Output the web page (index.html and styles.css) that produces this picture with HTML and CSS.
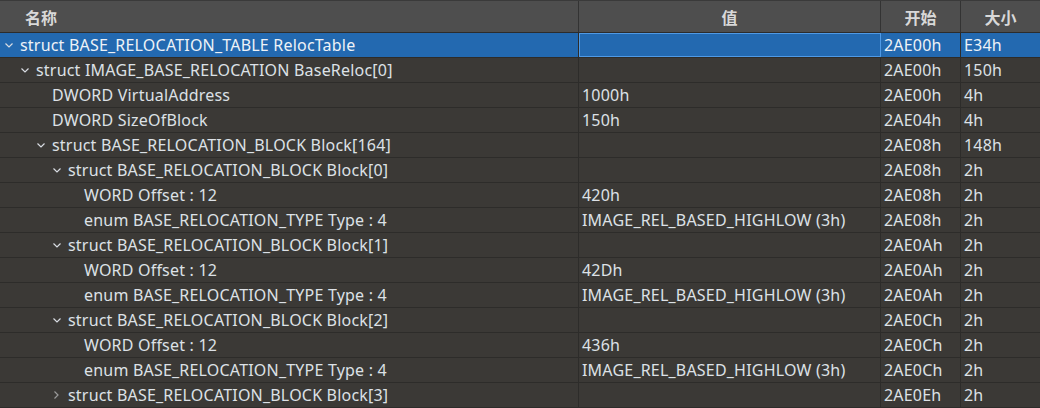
FILE: index.html
```html
<!DOCTYPE html>
<html>
<head>
<meta charset="utf-8">
<link rel="stylesheet" href="styles.css">
</head>
<body>
<div class="table">
  <div class="row head">
    <div class="cell name-h">名称</div>
    <div class="cell center">值</div>
    <div class="cell center">开始</div>
    <div class="cell center last">大小</div>
  </div>

  <div class="row selected">
    <div class="cell name l0"><svg class="chev" viewBox="0 0 8 5"><path d="M0.5 0.5 L4 4 L7.5 0.5"/></svg>struct BASE_RELOCATION_TABLE RelocTable</div>
    <div class="cell focus"></div>
    <div class="cell">2AE00h</div>
    <div class="cell last">E34h</div>
  </div>
  <div class="row">
    <div class="cell name l1"><svg class="chev" viewBox="0 0 8 5"><path d="M0.5 0.5 L4 4 L7.5 0.5"/></svg>struct IMAGE_BASE_RELOCATION BaseReloc[0]</div>
    <div class="cell"></div>
    <div class="cell">2AE00h</div>
    <div class="cell last">150h</div>
  </div>
  <div class="row">
    <div class="cell name l2">DWORD VirtualAddress</div>
    <div class="cell">1000h</div>
    <div class="cell">2AE00h</div>
    <div class="cell last">4h</div>
  </div>
  <div class="row">
    <div class="cell name l2">DWORD SizeOfBlock</div>
    <div class="cell">150h</div>
    <div class="cell">2AE04h</div>
    <div class="cell last">4h</div>
  </div>
  <div class="row">
    <div class="cell name l2 c"><svg class="chev" viewBox="0 0 8 5"><path d="M0.5 0.5 L4 4 L7.5 0.5"/></svg>struct BASE_RELOCATION_BLOCK Block[164]</div>
    <div class="cell"></div>
    <div class="cell">2AE08h</div>
    <div class="cell last">148h</div>
  </div>
  <div class="row">
    <div class="cell name l3 c"><svg class="chev" viewBox="0 0 8 5"><path d="M0.5 0.5 L4 4 L7.5 0.5"/></svg>struct BASE_RELOCATION_BLOCK Block[0]</div>
    <div class="cell"></div>
    <div class="cell">2AE08h</div>
    <div class="cell last">2h</div>
  </div>
  <div class="row">
    <div class="cell name l4">WORD Offset : 12</div>
    <div class="cell">420h</div>
    <div class="cell">2AE08h</div>
    <div class="cell last">2h</div>
  </div>
  <div class="row">
    <div class="cell name l4">enum BASE_RELOCATION_TYPE Type : 4</div>
    <div class="cell">IMAGE_REL_BASED_HIGHLOW (3h)</div>
    <div class="cell">2AE08h</div>
    <div class="cell last">2h</div>
  </div>
  <div class="row">
    <div class="cell name l3 c"><svg class="chev" viewBox="0 0 8 5"><path d="M0.5 0.5 L4 4 L7.5 0.5"/></svg>struct BASE_RELOCATION_BLOCK Block[1]</div>
    <div class="cell"></div>
    <div class="cell">2AE0Ah</div>
    <div class="cell last">2h</div>
  </div>
  <div class="row">
    <div class="cell name l4">WORD Offset : 12</div>
    <div class="cell">42Dh</div>
    <div class="cell">2AE0Ah</div>
    <div class="cell last">2h</div>
  </div>
  <div class="row">
    <div class="cell name l4">enum BASE_RELOCATION_TYPE Type : 4</div>
    <div class="cell">IMAGE_REL_BASED_HIGHLOW (3h)</div>
    <div class="cell">2AE0Ah</div>
    <div class="cell last">2h</div>
  </div>
  <div class="row">
    <div class="cell name l3 c"><svg class="chev" viewBox="0 0 8 5"><path d="M0.5 0.5 L4 4 L7.5 0.5"/></svg>struct BASE_RELOCATION_BLOCK Block[2]</div>
    <div class="cell"></div>
    <div class="cell">2AE0Ch</div>
    <div class="cell last">2h</div>
  </div>
  <div class="row">
    <div class="cell name l4">WORD Offset : 12</div>
    <div class="cell">436h</div>
    <div class="cell">2AE0Ch</div>
    <div class="cell last">2h</div>
  </div>
  <div class="row">
    <div class="cell name l4">enum BASE_RELOCATION_TYPE Type : 4</div>
    <div class="cell">IMAGE_REL_BASED_HIGHLOW (3h)</div>
    <div class="cell">2AE0Ch</div>
    <div class="cell last">2h</div>
  </div>
  <div class="row">
    <div class="cell name l3 c"><svg class="chev closed" viewBox="0 0 5 8"><path d="M0.5 0.5 L4 4 L0.5 7.5"/></svg>struct BASE_RELOCATION_BLOCK Block[3]</div>
    <div class="cell"></div>
    <div class="cell">2AE0Eh</div>
    <div class="cell last">2h</div>
  </div>
</div>
</body>
</html>
```

FILE: styles.css
```css
html, body {
  margin: 0;
  padding: 0;
  background: #3b3936;
  overflow: hidden;
}
.table {
  width: 1040px;
  font-family: "Noto Sans", "Noto Sans CJK SC", sans-serif;
  font-size: 16px;
  letter-spacing: 0.2px;
  color: #dde1e6;
}
.row {
  display: grid;
  grid-template-columns: 579px 302px 80px 79px;
  height: 25px;
  box-sizing: border-box;
  border-bottom: 1px solid #2d2c2a;
}
.cell {
  border-right: 1px solid #2d2c2a;
  display: flex;
  align-items: center;
  padding-left: 3px;
  white-space: nowrap;
  overflow: hidden;
  box-sizing: border-box;
  line-height: 24px;
}
.cell.last {
  border-right: none;
}
.head {
  height: 33px;
  background: #4e4e4e;
  border-top: 1px solid #3a3a3a;
  border-bottom: 1px solid #2c2c2c;
  font-family: "Noto Sans CJK SC", sans-serif;
  font-weight: bold;
  font-size: 16px;
  letter-spacing: 0;
  color: #d8d8d8;
}
.head .cell {
  border-right-color: #333;
  padding-left: 0;
}
.head .name-h {
  padding-left: 25px;
}
.head .center {
  justify-content: center;
}
.selected {
  background: #2369b0;
  color: #eef2f7;
}
.selected .cell {
  border-right-color: #2d2c2a;
}
.selected .focus {
  border: 1px solid #4f9ae6;
}
.name {
  padding-left: 0;
}
.chev {
  width: 8px;
  height: 5px;
  fill: none;
  stroke: #d8dce2;
  stroke-width: 1.2;
  margin-right: 7px;
  flex: none;
}
.chev.closed {
  width: 5px;
  height: 8px;
  stroke: #9a9a9a;
  margin-left: 1px;
  margin-right: 9px;
}
.l0 { padding-left: 5px; }
.l1 { padding-left: 21px; }
.l2 { padding-left: 52px; }
.l2.c { padding-left: 37px; }
.l3.c { padding-left: 53px; }
.l4 { padding-left: 84px; }
```
